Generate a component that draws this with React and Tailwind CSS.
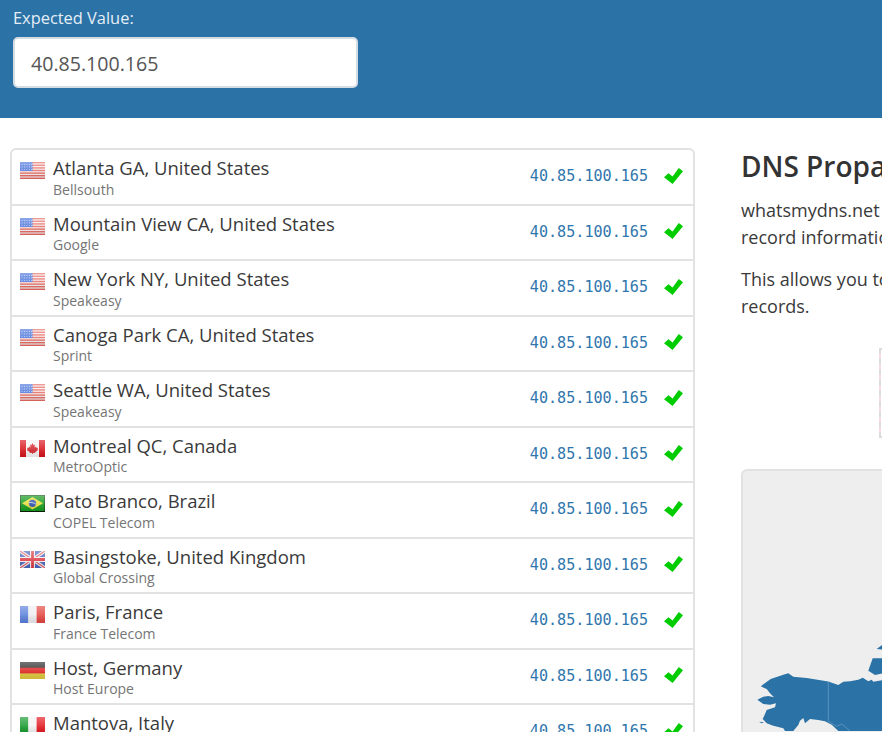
import { Fragment } from 'react';

const IP = '40.85.100.165';

const rows = [
  { flag: 'us', place: 'Atlanta GA, United States', isp: 'Bellsouth' },
  { flag: 'us', place: 'Mountain View CA, United States', isp: 'Google' },
  { flag: 'us', place: 'New York NY, United States', isp: 'Speakeasy' },
  { flag: 'us', place: 'Canoga Park CA, United States', isp: 'Sprint' },
  { flag: 'us', place: 'Seattle WA, United States', isp: 'Speakeasy' },
  { flag: 'ca', place: 'Montreal QC, Canada', isp: 'MetroOptic' },
  { flag: 'br', place: 'Pato Branco, Brazil', isp: 'COPEL Telecom' },
  { flag: 'gb', place: 'Basingstoke, United Kingdom', isp: 'Global Crossing' },
  { flag: 'fr', place: 'Paris, France', isp: 'France Telecom' },
  { flag: 'de', place: 'Host, Germany', isp: 'Host Europe' },
  { flag: 'it', place: 'Mantova, Italy', isp: 'Fastweb' },
];

function FlagArt({ code }) {
  if (code === 'us') {
    return (
      <>
        <rect width="25" height="17" fill="#f6eeee" />
        {[0, 2.6, 5.2, 7.8, 10.4, 13, 15.6].map((y) => (
          <rect key={y} y={y} width="25" height="1.4" fill="#e66a62" />
        ))}
        <rect width="12.5" height="9" fill="#4f78dc" />
        {[1.5, 4, 6.5, 9, 11].map((x) => (
          <Fragment key={x}>
            <rect x={x} y="2" width="1" height="1" fill="#a9bdf0" />
            <rect x={x} y="4.5" width="1" height="1" fill="#a9bdf0" />
            <rect x={x} y="7" width="1" height="1" fill="#a9bdf0" />
          </Fragment>
        ))}
      </>
    );
  }
  if (code === 'ca') {
    return (
      <>
        <rect width="25" height="17" fill="#f7f4f4" />
        <rect width="6" height="17" fill="#d9141c" />
        <rect x="19" width="6" height="17" fill="#d9141c" />
        <path d="M12.5 3l1.2 2.2 1.3-.6-.5 3 1.6-1 .5 1.3 1.4-.2-.5 1.8.7.5-2.8 2-.3 1-2.2-.3V14h-.8v-1.3l-2.2.3-.3-1-2.8-2 .7-.5-.5-1.8 1.4.2.5-1.3 1.6 1-.5-3 1.3.6z" fill="#d3232b" />
      </>
    );
  }
  if (code === 'br') {
    return (
      <>
        <rect width="25" height="17" fill="#0f1a0c" />
        <rect x="0.5" y="0.5" width="24" height="15.5" fill="#149a1c" />
        <path d="M12.5 2L23 8.3 12.5 14.6 2 8.3z" fill="#e6dc3a" />
        <circle cx="12.5" cy="8.3" r="3.6" fill="#2a4fa8" />
        <path d="M9 7.6c2.5-.4 5 .2 7 1.6" stroke="#dfe6fa" strokeWidth="0.8" fill="none" />
      </>
    );
  }
  if (code === 'gb') {
    return (
      <>
        <rect width="25" height="17" fill="#4a66bc" />
        <path d="M0 0L25 17M25 0L0 17" stroke="#f3eef0" strokeWidth="3.4" />
        <path d="M0 0L25 17M25 0L0 17" stroke="#e0626a" strokeWidth="1.2" />
        <path d="M12.5 0V17M0 8.5H25" stroke="#f3eef0" strokeWidth="5" />
        <path d="M12.5 0V17M0 8.5H25" stroke="#dc3a44" strokeWidth="2.8" />
      </>
    );
  }
  if (code === 'fr') {
    return (
      <>
        <rect width="8.4" height="17" fill="#5a80dc" />
        <rect x="8.4" width="8.2" height="17" fill="#eeeef2" />
        <rect x="16.6" width="8.4" height="17" fill="#e4453f" />
      </>
    );
  }
  if (code === 'de') {
    return (
      <>
        <rect width="25" height="17" fill="#e0c93c" />
        <rect width="25" height="11.4" fill="#df1f1f" />
        <rect width="25" height="5.7" fill="#2a2a2a" />
      </>
    );
  }
  return (
    <>
      <rect width="8.4" height="17" fill="#159a2c" />
      <rect x="8.4" width="8.2" height="17" fill="#f5f3f3" />
      <rect x="16.6" width="8.4" height="17" fill="#e3161e" />
    </>
  );
}

function Flag({ code }) {
  return (
    <svg viewBox="0 0 25 17" className="mt-3 h-[17px] w-[25px] shrink-0">
      <defs>
        <linearGradient id="gloss" x1="0" y1="0" x2="0" y2="1">
          <stop offset="0" stopColor="#fff" stopOpacity="0.35" />
          <stop offset="0.5" stopColor="#fff" stopOpacity="0.15" />
          <stop offset="1" stopColor="#000" stopOpacity="0.08" />
        </linearGradient>
      </defs>
      <FlagArt code={code} />
      <rect width="25" height="17" fill="url(#gloss)" />
    </svg>
  );
}

function Check() {
  return (
    <svg viewBox="0 0 18.4 15.4" className="h-[16px] w-[19px] shrink-0">
      <path d="M0 9l4.3-4 4 3.3L14.3 0l4.1 3L8.3 15.4z" fill="#00cc00" />
    </svg>
  );
}

function ResultRow({ row }) {
  return (
    <div className="flex h-[55.5px] shrink-0 border-b-2 border-[#e2e2e2] pl-[8px] pr-[10px] last:border-b-0">
      <Flag code={row.flag} />
      <div className="ml-2 min-w-0 flex-1 pt-[5px]">
        <div className="text-[18.5px] leading-[26px] text-[#3a3a3a]">{row.place}</div>
        <div className="mt-[0.5px] text-[14px] leading-[16px] text-[#757575]">{row.isp}</div>
      </div>
      <div className="mt-[15px] font-['DejaVu_Sans_Mono',monospace] text-[15.1px] leading-[22px] text-[#2f76ad]">{IP}</div>
      <div className="ml-[16px] mt-[17.5px]">
        <Check />
      </div>
    </div>
  );
}

function MapPanel() {
  return (
    <div className="mt-[31px] h-[300px] w-[600px] rounded-t-md border-2 border-b-0 border-[#e2e2e2] bg-[#eeeeee]">
      <svg viewBox="743 472 141 260" className="block h-[260px] w-[141px]">
        <path
          d="M757.3 700.7L763.3 697.7L768.3 697L774 698.3L770 694.3L766.7 690L760.7 687.3L770.7 680L783.3 675.7L788.3 674.3L793.3 677.7L806.7 679L828.3 682.5L838.3 686L843.3 682.7L850 682.3L858.3 680.7L862.7 678.7L868.3 682.3L871.7 680.7L873.3 682.7L884 681V732H838.3L831.7 725.7L825 722.3L818.3 721L810 720L805 724.3L803.3 719L800 721.7L798.3 726L793.3 732H785L783.3 729.3L773.3 726.7L766.7 724.3L762.7 720L765 715L766.7 711L775 708.3L776 704.3L770 705.7L763.3 705Z"
          fill="#2b72a7"
        />
        <path d="M876.7 650L884 644.5V650.7Z" fill="#2b72a7" />
        <path d="M872.7 659.3H884V674L875 676L868.3 671.7Z" fill="#2b72a7" />
        <path d="M759 722.7L764 723.3L761.7 724.3Z" fill="#2b72a7" />
        <path d="M828.3 682.5V722.3L836.7 727.3L841.7 725L850 731.7" stroke="#7ba6c8" strokeWidth="0.6" fill="none" />
      </svg>
    </div>
  );
}

export default function App() {
  return (
    <div className="h-screen overflow-hidden bg-white font-['Open_Sans',sans-serif]">
      <header className="h-[118px] bg-[#2b72a7] pl-[13px] pt-[6px]">
        <label className="block text-[16.4px] font-medium leading-[24px] text-[#e6eef5]">Expected Value:</label>
        <input
          readOnly
          value={IP}
          className="mt-[7px] block h-[51px] w-[345px] rounded-[5px] border-2 border-[#d5dde4] bg-white px-4 pt-[2px] text-[19.6px] text-[#555555] outline-none"
        />
      </header>

      <main className="flex gap-[46px] pl-[10px] pt-[30px]">
        <div className="flex h-[640px] w-[685px] shrink-0 flex-col rounded-t-md border-2 border-[#e2e2e2]">
          {rows.map((row) => (
            <ResultRow key={row.place} row={row} />
          ))}
        </div>

        <section className="w-[600px] shrink-0">
          <h1 className="whitespace-nowrap text-[28px] font-semibold leading-[36px] text-[#333333]">DNS Propagation Checker</h1>
          <p className="mt-[13px] whitespace-nowrap text-[18px] leading-[26.5px] text-[#3a3a3a]">
            whatsmydns.net lets you instantly perform a DNS lookup
            <br />
            record information against multiple name servers
          </p>
          <p className="mt-[16px] whitespace-nowrap text-[18px] leading-[26.5px] text-[#3a3a3a]">
            This allows you to check the current state of DNS
            <br />
            records.
          </p>
          <div className="ml-[138px] mt-[29px] h-[90px] w-[400px] border-2 border-dashed border-[#dcdcdc] bg-[#f9dde2]">
            <div className="h-full bg-white" />
          </div>
          <MapPanel />
        </section>
      </main>
    </div>
  );
}
